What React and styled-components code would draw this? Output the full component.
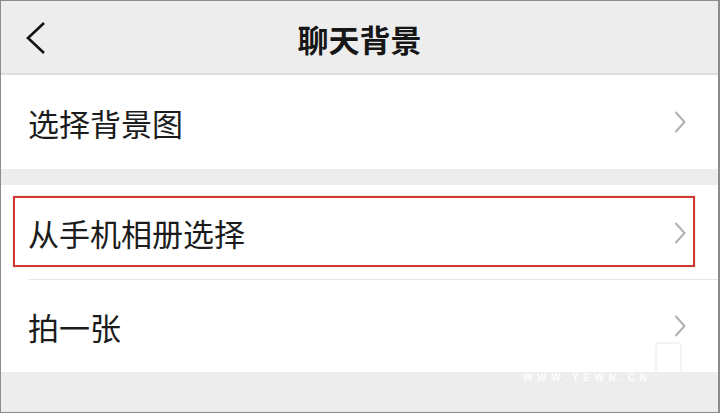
import styled, { createGlobalStyle } from "styled-components";

const GlobalStyle = createGlobalStyle`
  html, body {
    margin: 0;
    padding: 0;
    background: #ffffff;
  }
  body {
    font-family: "Noto Sans CJK SC", "Noto Sans", sans-serif;
  }
`;

const Screen = styled.div`
  position: relative;
  width: 720px;
  height: 413px;
  box-sizing: border-box;
  border: 1px solid #8c8c8c;
  border-right-width: 2px;
  background: #ededed;
  display: flex;
  flex-direction: column;
  overflow: hidden;
`;

const TopBar = styled.header`
  position: relative;
  height: 72px;
  display: flex;
  align-items: center;
  justify-content: center;
  border-bottom: 2px solid #dedede;
  flex-shrink: 0;
`;

const BackButton = styled.button`
  position: absolute;
  left: 19px;
  top: 20px;
  width: 30px;
  height: 34px;
  padding: 0;
  border: 0;
  background: none;
  display: flex;
  align-items: center;
  justify-content: center;
`;

const Title = styled.h1`
  margin: 0;
  font-size: 31px;
  font-weight: 700;
  color: #161616;
  line-height: 1;
  padding-top: 2px;
`;

const Group = styled.section`
  background: #ffffff;
  margin-top: ${(p) => p.gap || 0}px;
  display: flex;
  flex-direction: column;
`;

const Row = styled.div`
  position: relative;
  height: ${(p) => p.h}px;
  display: flex;
  align-items: center;
  justify-content: space-between;
  padding: 0 31px 0 27px;
  box-sizing: border-box;
  &:not(:last-child)::after {
    content: "";
    position: absolute;
    left: 28px;
    right: 0;
    bottom: 0;
    height: 1px;
    background: #e6e6e6;
  }
`;

const Label = styled.span`
  font-size: 31px;
  color: #1c1c1c;
  line-height: 1;
`;

const Highlight = styled.div`
  position: absolute;
  left: 12px;
  top: 11px;
  width: 682px;
  height: 71px;
  box-sizing: border-box;
  border: 2px solid #cf3b33;
  box-shadow: 0 0 1px rgba(207, 59, 51, 0.5);
  pointer-events: none;
`;

const Watermark = styled.div`
  position: absolute;
  left: 522px;
  top: 341px;
  display: flex;
  align-items: flex-end;
  gap: 4px;
`;

const MarkText = styled.span`
  font-family: "Liberation Sans", Arial, sans-serif;
  font-size: 10px;
  font-weight: 700;
  letter-spacing: 4.6px;
  color: rgba(255, 255, 255, 0.9);
  line-height: 1;
  margin-bottom: 3px;
`;

const Chevron = () => (
  <svg width="14" height="24" viewBox="0 0 14 24">
    <path d="M2.5 2 L11.5 12 L2.5 22" fill="none" stroke="#b0b0b0" strokeWidth="2" />
  </svg>
);

const items = [
  { label: "选择背景图" },
  { label: "从手机相册选择", marked: true },
  { label: "拍一张" },
];

export default function App() {
  return (
    <>
      <GlobalStyle />
      <Screen>
        <TopBar>
          <BackButton aria-label="返回">
            <svg width="30" height="34" viewBox="0 0 30 34">
              <path d="M24 2 L8 17 L24 32" fill="none" stroke="#111" strokeWidth="2.6" />
            </svg>
          </BackButton>
          <Title>聊天背景</Title>
        </TopBar>

        <Group>
          <Row h={94}>
            <Label>{items[0].label}</Label>
            <Chevron />
          </Row>
        </Group>

        <Group gap={16}>
          {items.slice(1).map((it, i) => (
            <Row key={it.label} h={i === 0 ? 95 : 92}>
              <Label>{it.label}</Label>
              <Chevron />
              {it.marked && <Highlight />}
            </Row>
          ))}
        </Group>

        <Watermark>
          <MarkText>WWW.YEWN.CN</MarkText>
          <svg width="27" height="44" viewBox="0 0 27 44">
            <rect x="1" y="1" width="25" height="42" rx="3" fill="none" stroke="rgba(238,238,238,0.9)" strokeWidth="1.5" />
            <line x1="1" y1="36" x2="26" y2="36" stroke="rgba(238,238,238,0.9)" strokeWidth="1.2" />
            <rect x="11" y="38" width="5" height="2" fill="rgba(238,238,238,0.9)" />
          </svg>
        </Watermark>
      </Screen>
    </>
  );
}
